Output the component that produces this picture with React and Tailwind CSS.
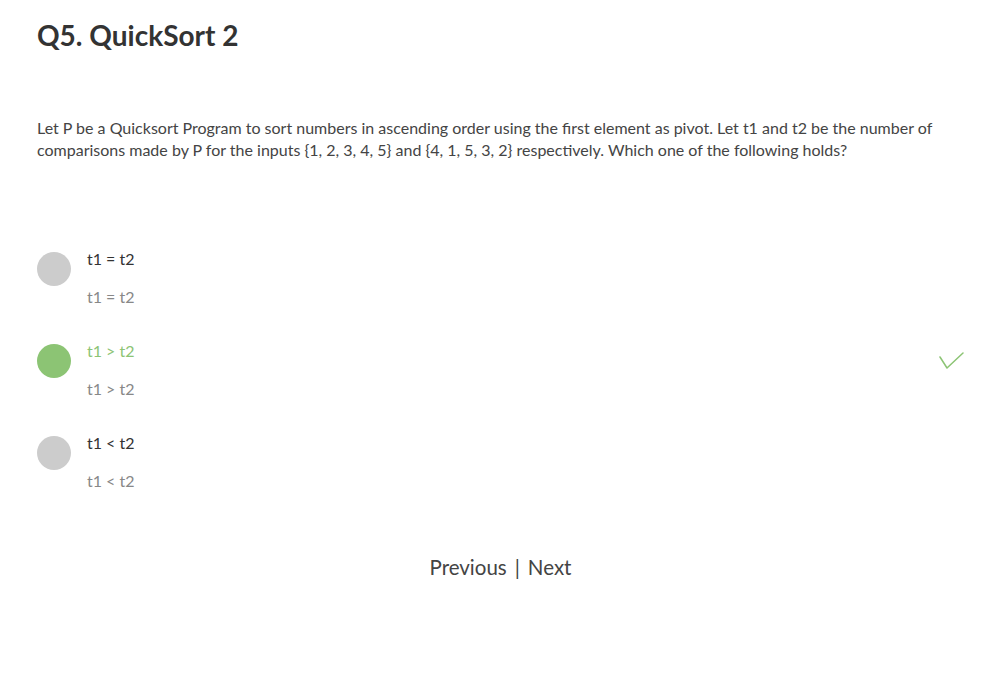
import React from "react";

const options = [
  { label: "t1 = t2", selected: false },
  { label: "t1 > t2", selected: true },
  { label: "t1 < t2", selected: false },
];

export default function App() {
  return (
    <div className="min-h-[678px] w-full bg-white pl-[37px] pr-[30px] pt-[16px] text-[#444]" style={{ fontFamily: "Lato, 'Open Sans', sans-serif" }}>
      <h1 className="text-[28px] font-bold leading-[38px] text-[#333]">Q5. QuickSort 2</h1>
      <p className="mt-[63px] pr-[20px] text-[16px] leading-[22px] text-[#444]">
        Let P be a Quicksort Program to sort numbers in ascending order using the first element as pivot. Let t1 and t2 be the number of comparisons made by P for the inputs {"{1, 2, 3, 4, 5}"} and {"{4, 1, 5, 3, 2}"} respectively. Which one of the following holds?
      </p>
      <div className="mt-[87px] flex flex-col gap-[32px]">
        {options.map((o) => (
          <div key={o.label} className="flex items-start">
            <div className={`mt-[4px] h-[34px] w-[34px] shrink-0 rounded-full ${o.selected ? "bg-[#8cc474]" : "bg-[#cccccc]"}`} />
            <div className="ml-[16px] flex flex-1 flex-col gap-[16px] text-[16px] leading-[22px]">
              <span className={o.selected ? "text-[#8cc474]" : "text-[#333]"}>{o.label}</span>
              <span className="text-[#888]">{o.label}</span>
            </div>
            {o.selected && (
              <svg className="mt-[12px] mr-[0px] shrink-0" width="26" height="18" viewBox="0 0 26 18" fill="none">
                <path d="M2 5 L9 16 L25 1" stroke="#8cc474" strokeWidth="1.5" strokeLinecap="round" strokeLinejoin="round" />
              </svg>
            )}
          </div>
        ))}
      </div>
      <div className="mt-[61px] flex items-center justify-center gap-[8px] text-[20.5px] leading-[28px] text-[#444]">
        <span>Previous</span>
        <span>|</span>
        <span>Next</span>
      </div>
    </div>
  );
}
